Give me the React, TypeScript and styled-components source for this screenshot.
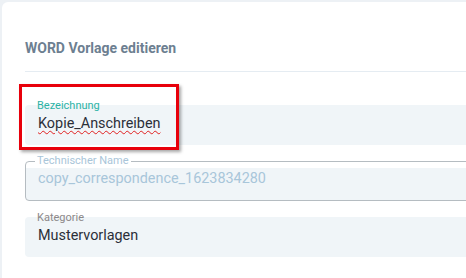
import React from "react";
import styled, { createGlobalStyle } from "styled-components";

const GlobalStyle = createGlobalStyle`
  html, body {
    margin: 0;
    padding: 0;
    background: #edf1f5;
    overflow: hidden;
    font-family: Roboto, "Noto Sans", sans-serif;
  }
`;

const Page = styled.div`
  padding: 2px 0 0 2px;
  position: relative;
  width: 466px;
  height: 278px;
  box-sizing: border-box;
  overflow: hidden;
`;

const Card = styled.div`
  background: #ffffff;
  border-radius: 6px;
  width: 700px;
  height: 400px;
  box-sizing: border-box;
  padding-left: 23px;
`;

const Header = styled.div`
  height: 70px;
  box-sizing: border-box;
  padding-top: 38px;
  border-bottom: 1px solid #e5ecf2;
`;

const Title = styled.h2`
  margin: 0;
  font-size: 14px;
  line-height: 16px;
  font-weight: 700;
  color: #6d7f91;
`;

const Form = styled.div`
  display: flex;
  flex-direction: column;
  gap: 16px;
  padding-top: 33px;
`;

const FilledField = styled.div`
  position: relative;
  height: 40px;
  background: #f0f5f8;
  border-radius: 4px;
  padding-left: 13px;
  box-sizing: border-box;
`;

const FloatLabel = styled.label<{ $color: string }>`
  position: absolute;
  left: 12px;
  top: -6px;
  font-size: 11px;
  line-height: 13px;
  color: ${(p) => p.$color};
`;

const Value = styled.div`
  padding-top: 10px;
  font-size: 14.4px;
  line-height: 18px;
  color: #2b2f38;
`;

const Misspelled = styled.span`
  text-decoration: underline wavy #e02020;
  text-decoration-thickness: 1px;
  text-underline-offset: 2px;
`;

const OutlinedField = styled.fieldset`
  position: relative;
  margin: -6px 0 0 0;
  height: 46px;
  box-sizing: border-box;
  border: 1px solid #b5bcc1;
  border-radius: 4px;
  background: linear-gradient(to bottom, transparent 6px, #f0f5f8 6px);
  padding: 0 0 0 12px;
`;

const Legend = styled.legend`
  font-size: 11px;
  line-height: 12px;
  padding: 0 2px;
  margin-left: -3px;
  color: #a9c5d9;
`;

const DisabledValue = styled.div`
  padding-top: 3px;
  font-size: 14.4px;
  line-height: 18px;
  color: #a8c6da;
`;

const Highlight = styled.div`
  position: absolute;
  left: 19px;
  top: 84px;
  width: 160px;
  height: 66px;
  box-sizing: border-box;
  border: 3px solid #e8000b;
  box-shadow: 2px 2px 3px rgba(0, 0, 0, 0.35);
  pointer-events: none;
`;

export default function App() {
  return (
    <>
      <GlobalStyle />
      <Page>
        <Card>
          <Header>
            <Title>WORD Vorlage editieren</Title>
          </Header>
          <Form>
            <FilledField>
              <FloatLabel $color="#2bb3a6">Bezeichnung</FloatLabel>
              <Value>
                <Misspelled>Kopie_Anschreiben</Misspelled>
              </Value>
            </FilledField>
            <OutlinedField>
              <Legend>Technischer Name</Legend>
              <DisabledValue>copy_correspondence_1623834280</DisabledValue>
            </OutlinedField>
            <FilledField>
              <FloatLabel $color="#8c8889">Kategorie</FloatLabel>
              <Value>Mustervorlagen</Value>
            </FilledField>
          </Form>
        </Card>
        <Highlight />
      </Page>
    </>
  );
}
